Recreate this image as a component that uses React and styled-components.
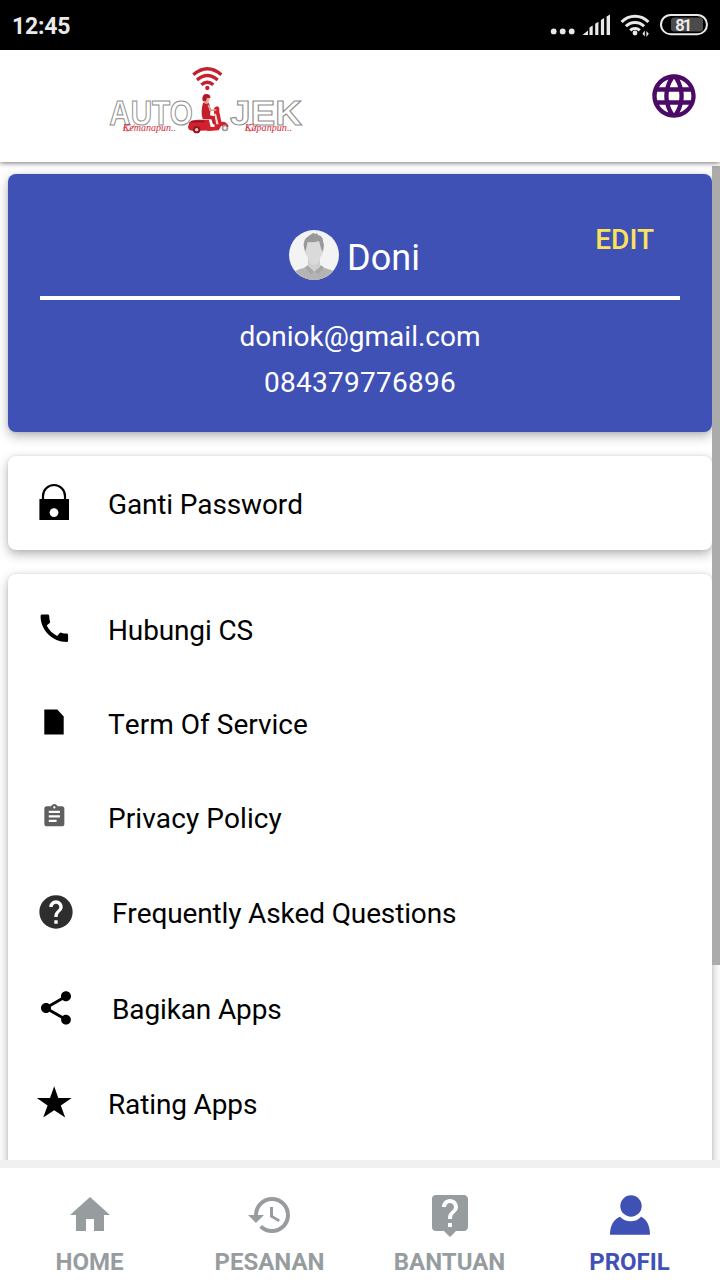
import React from 'react'
import styled, { createGlobalStyle } from 'styled-components'
import {
  MdAssignment,
  MdCall,
  MdHelp,
  MdHistory,
  MdHome,
  MdLanguage,
  MdLiveHelp,
  MdShare
} from 'react-icons/md'

const GlobalStyle = createGlobalStyle`
  * {
    box-sizing: border-box;
  }
  body {
    margin: 0;
    background: #fff;
    font-family: Roboto, 'Liberation Sans', sans-serif;
  }
`

const Screen = styled.div`
  display: flex;
  flex-direction: column;
  width: 720px;
  height: 1280px;
  overflow: hidden;
  background: #fff;
`

const StatusBar = styled.div`
  flex: none;
  display: flex;
  align-items: center;
  justify-content: space-between;
  height: 50px;
  padding-left: 12px;
  background: #000;
  color: #e9e9e9;
`

const Clock = styled.span`
  font-size: 23px;
  font-weight: 700;
  line-height: 28px;
  padding-top: 4px;
  letter-spacing: -0.2px;
`

const Header = styled.header`
  flex: none;
  display: flex;
  justify-content: space-between;
  height: 112px;
  padding: 5px 20px 0 100px;
  background: #fff;
  box-shadow: 0 1px 5px rgba(0, 0, 0, 0.55);
  position: relative;
  z-index: 1;
`

const LanguageButton = styled.button`
  display: flex;
  align-self: flex-start;
  margin: 15px 0 0;
  padding: 0;
  border: 0;
  background: none;
  color: #4b0a66;
`

const Content = styled.main`
  flex: 1;
  min-height: 0;
  display: flex;
  flex-direction: column;
  gap: 24px;
  padding: 12px 8px 0;
  overflow: hidden;
  position: relative;
`

const ScrollThumb = styled.div`
  position: absolute;
  top: 4px;
  right: 0;
  width: 8px;
  height: 799px;
  background: #ababab;
`

const Card = styled.section`
  flex: none;
  border-radius: 8px;
  background: #fff;
  box-shadow: 0 4px 11px rgba(0, 0, 0, 0.3), 0 0 3px rgba(0, 0, 0, 0.1);
`

const MenuCard = styled(Card)`
  padding: ${p => p.$list ? '9px 0 40px' : '0'};
`

const AccountCard = styled(Card)`
  height: 258px;
  padding: 0 32px;
  background: #3f51b5;
  color: #fff;
`

const AccountTop = styled.div`
  display: grid;
  grid-template-columns: 1fr auto 1fr;
  height: 126px;
  border-bottom: 4px solid #fff;
`

const Identity = styled.div`
  grid-column: 2;
  display: flex;
  gap: 8px;
  padding: 56px 11px 0 0;
`

const Name = styled.span`
  font-size: 36px;
  line-height: 42px;
  padding-top: 7px;
`

const EditButton = styled.button`
  justify-self: end;
  align-self: start;
  margin: 49px 26px 0 0;
  padding: 0;
  border: 0;
  background: none;
  color: #fbe25b;
  font-family: inherit;
  font-size: 28px;
  font-weight: 500;
  line-height: 34px;
`

const Contact = styled.div`
  display: flex;
  flex-direction: column;
  align-items: center;
  padding-top: 14px;
  font-size: 28px;
  line-height: 46px;
`

const Phone = styled.span`
  letter-spacing: 0.25px;
`

const Row = styled.div`
  display: flex;
  align-items: center;
  gap: ${p => p.$wide ? 36 : 34}px;
  height: ${p => p.$height || 94}px;
  padding-left: ${p => p.$wide ? 28 : 26}px;
  color: #000;
`

const RowIcon = styled.span`
  display: flex;
  align-items: center;
  justify-content: center;
  width: 40px;
  height: 40px;
  margin-bottom: ${p => p.$wide ? 2 : 4}px;
  color: ${p => p.$color || '#000'};
`

const RowLabel = styled.span`
  font-size: 28px;
  line-height: 34px;
  padding-top: ${p => p.$low ? 4 : 2}px;
  font-kerning: none;
  letter-spacing: ${p => p.$tracking || -0.14}px;
`

const TabBar = styled.nav`
  flex: none;
  display: grid;
  grid-template-columns: repeat(4, 1fr);
  height: 120px;
  border-top: 8px solid #f0f0f0;
  background: #fff;
`

const Tab = styled.div`
  display: flex;
  flex-direction: column;
  align-items: center;
  padding-top: 23px;
  color: ${p => p.$active ? '#3f51b5' : '#979d9f'};
`

const TabLabel = styled.span`
  margin: 8px 1px 0 0;
  font-size: 24px;
  font-weight: 700;
  line-height: 30px;
`

const StatusIcons = () => (
  <svg width="180" height="50" viewBox="0 0 180 50" fill="#e9e9e9">
    <circle cx="13.7" cy="31.4" r="2.9" />
    <circle cx="22.7" cy="31.4" r="2.9" />
    <circle cx="31.7" cy="31.4" r="2.9" />
    <path d="M42.5 35l5.5-4.5V35zM49.5 27.5l3.2-2V35h-3.2zM55.2 23.8l3.2-2V35h-3.2zM60.9 20l3.2-2V35h-3.2zM66.6 16.5l3.4-2V35h-3.4z" />
    <g fill="none" stroke="#e9e9e9" strokeWidth="3">
      <path d="M81.6 22a18.6 18.6 0 0 1 26.8 0" />
      <path d="M85.9 26.3a12.8 12.8 0 0 1 18.2 0" />
      <path d="M90.2 30.4a7 7 0 0 1 9.6 0" />
    </g>
    <circle cx="95" cy="33" r="2.4" />
    <path d="M104.8 30.5v6l-2.4-2.7zM106.4 37v-6l2.4 2.7z" />
    <rect x="131" y="17.5" width="32" height="14" rx="3" fill="#4b4b4b" />
    <rect x="121" y="15" width="46" height="19.2" rx="9.6" fill="none" stroke="#e9e9e9" strokeWidth="2" />
    <text x="143.8" y="30.5" fontSize="16.5" fontWeight="700" textAnchor="middle" textLength="17">81</text>
  </svg>
)

const Logo = () => (
  <svg width="220" height="90" viewBox="0 0 660 270">
    <g fill="none" stroke="#c4202f" strokeWidth="10">
      <path d="M280 59q42-36 84 0" />
      <path d="M291 75q31-27 62 0" />
      <path d="M304 89q18-15 36 0" />
    </g>
    <circle cx="322" cy="99" r="6.5" fill="#c4202f" />
    <g
      fill="#fff"
      stroke="#8d8d8d"
      strokeWidth="3.2"
      fontFamily="'Liberation Sans', sans-serif"
      fontSize="103"
      fontWeight="700"
    >
      <text x="28" y="209" textLength="250" lengthAdjust="spacingAndGlyphs">AUTO</text>
      <text x="390" y="209" textLength="216" lengthAdjust="spacingAndGlyphs">JEK</text>
    </g>
    <g fill="#d02c3a" fontFamily="'Liberation Serif', serif" fontSize="34" fontStyle="italic">
      <text x="68" y="229" textLength="160" lengthAdjust="spacingAndGlyphs">Kemanapun..</text>
      <text x="434" y="229" textLength="142" lengthAdjust="spacingAndGlyphs">Kapanpun..</text>
    </g>
    {/* swashes under the capitals of the slogan */}
    <g fill="none" stroke="#d02c3a" strokeWidth="2">
      <path d="M92 208q-18-2-20 8t10 12q12 0 22-20" />
      <path d="M462 208q-18-2-22 8t8 12q14 0 24-20" />
    </g>
    {/* scooter */}
    <path d="M342 162q2-8 12-8l4 6 0 10 6 30q12 4 18 14l-4 4-14-6-8 14-34 2-6-20h20l10-4-4-24z" fill="#d3202e" />
    <path d="M268 202q8-8 26-8l34 0 6 14 10 12-4 6-60 2q-16-2-16-12z" fill="#d3202e" />
    <path d="M274 200l40-1" stroke="#8f1722" strokeWidth="5" />
    <path d="M326 192l16 2 2 22-12 0z" fill="#fff" />
    <path d="M342 176l6 0 8 32-8 0z" fill="#f6dada" />
    <circle cx="290" cy="224" r="11" fill="#8f1722" />
    <circle cx="290" cy="224" r="5" fill="#f2caca" />
    <circle cx="375" cy="219" r="10" fill="#999" />
    <circle cx="375" cy="219" r="5" fill="#f4f4f4" />
    <path d="M358 205q18-8 26 10" fill="none" stroke="#d3202e" strokeWidth="5" />
    {/* rider */}
    <path d="M309 144q10-7 18 1l5 18-2 18 14 3 4 24h-9l-5-15-26-1q-7-22 1-48z" fill="#c41d2b" />
    <path d="M325 150l6 16 18-1" fill="none" stroke="#e2a294" strokeWidth="5" />
    <path d="M313 138h13l-1 8h-11z" fill="#e2a294" />
    <circle cx="321" cy="132" r="8" fill="#e8b3a4" />
    <path d="M307 134q-1-17 12-17t12 12l-10 0-3 10h-9z" fill="#b01a28" />
  </svg>
)

const Avatar = () => (
  <svg width="50" height="50" viewBox="0 0 50 50">
    <clipPath id="avatar">
      <circle cx="25" cy="25" r="25" />
    </clipPath>
    <g clipPath="url(#avatar)">
      <path d="M0 0h50v50H0z" fill="#f3f3f3" />
      <path d="M4 43q3-3 7-4 5-1 8-4h12q4 3 8 4 5 1 8 4v8H4z" fill="#b4b4b4" />
      <path d="M19 29h12v8l-6 5-6-5z" fill="#cfcfcf" />
      <path d="M18.500 35.500l6.500 6-3 3-5.500-7zM32.500 35.500l-6.500 6 3 3 5.500-7z" fill="#a6a6a6" />
      <path d="M16 22q-3-10 1-14l4-3 3-2 3 1 1-1 1 2q5 1 5 6l1 4-1 7H16z" fill="#999" />
      <path d="M17 20l1.500-8q6 1 11.500-1l2.500 9q2 0 1 4l-2 3q-2 8-6.500 8t-6.500-8l-2-3q-1-4 .5-4z" fill="#dadada" />
    </g>
  </svg>
)

const LockIcon = () => (
  <svg width="40" height="40" viewBox="0 0 40 40">
    <path d="M9 20v-5a11 11 0 0 1 22 0v5" fill="none" stroke="#000" strokeWidth="2.2" />
    <path d="M5.4 18H35v21H5.4z" />
    <circle cx="20" cy="31.6" r="4.4" fill="#fff" />
  </svg>
)

const DocumentIcon = () => (
  <svg width="40" height="40" viewBox="0 0 40 40">
    <path d="M10.3 7.4h13l6.4 7v18H10.3z" />
  </svg>
)

const StarIcon = () => (
  <svg width="40" height="40" viewBox="0 0 40 40">
    <path d="M20.2 4.2l4.1 11.8h13.4l-10.9 7.6 4.4 12-11-7.4-11 7.4 4.4-12L2.8 16H16z" />
  </svg>
)

const ProfileIcon = () => (
  <svg width="48" height="48" viewBox="0 0 48 48" fill="currentColor">
    <circle cx="25" cy="15" r="10.7" />
    <path d="M4 43.8C4 34 8 28 14 25.7q4.5 4.6 10.7 4.6T35 25.7C40.5 28 44 34 44 43.8z" />
  </svg>
)

const menu = [
  { label: 'Hubungi CS', icon: <MdCall size={36.7} /> },
  { label: 'Term Of Service', icon: <DocumentIcon />, tracking: 0.04 },
  { label: 'Privacy Policy', icon: <MdAssignment size={26.7} />, color: '#5f5f5f', tracking: 0.08 },
  { label: 'Frequently Asked Questions', icon: <MdHelp size={40} />, color: '#2e2e2e', wide: true, height: 96 },
  { label: 'Bagikan Apps', icon: <MdShare size={40} />, wide: true, height: 96 },
  { label: 'Rating Apps', icon: <StarIcon /> }
]

const tabs = [
  { label: 'HOME', icon: <MdHome size={48} /> },
  { label: 'PESANAN', icon: <MdHistory size={48} /> },
  { label: 'BANTUAN', icon: <MdLiveHelp size={48} /> },
  { label: 'PROFIL', icon: <ProfileIcon />, active: true }
]

const MenuRow = ({ label, icon, color, wide, height, low, tracking }) => (
  <Row $wide={wide} $height={height}>
    <RowIcon $color={color} $wide={wide}>{icon}</RowIcon>
    <RowLabel $low={low} $tracking={tracking}>{label}</RowLabel>
  </Row>
)

const App = () => (
  <Screen>
    <GlobalStyle />
    <StatusBar>
      <Clock>12:45</Clock>
      <StatusIcons />
    </StatusBar>
    <Header>
      <Logo />
      <LanguageButton>
        <MdLanguage size={52} />
      </LanguageButton>
    </Header>
    <Content>
      <AccountCard>
        <AccountTop>
          <Identity>
            <Avatar />
            <Name>Doni</Name>
          </Identity>
          <EditButton>EDIT</EditButton>
        </AccountTop>
        <Contact>
          <span>doniok@gmail.com</span>
          <Phone>084379776896</Phone>
        </Contact>
      </AccountCard>
      <MenuCard>
        <MenuRow label="Ganti Password" icon={<LockIcon />} low />
      </MenuCard>
      <MenuCard $list>
        {menu.map(item => <MenuRow key={item.label} {...item} />)}
      </MenuCard>
      <ScrollThumb />
    </Content>
    <TabBar>
      {tabs.map(tab => (
        <Tab key={tab.label} $active={tab.active}>
          {tab.icon}
          <TabLabel>{tab.label}</TabLabel>
        </Tab>
      ))}
    </TabBar>
  </Screen>
)

export default App
